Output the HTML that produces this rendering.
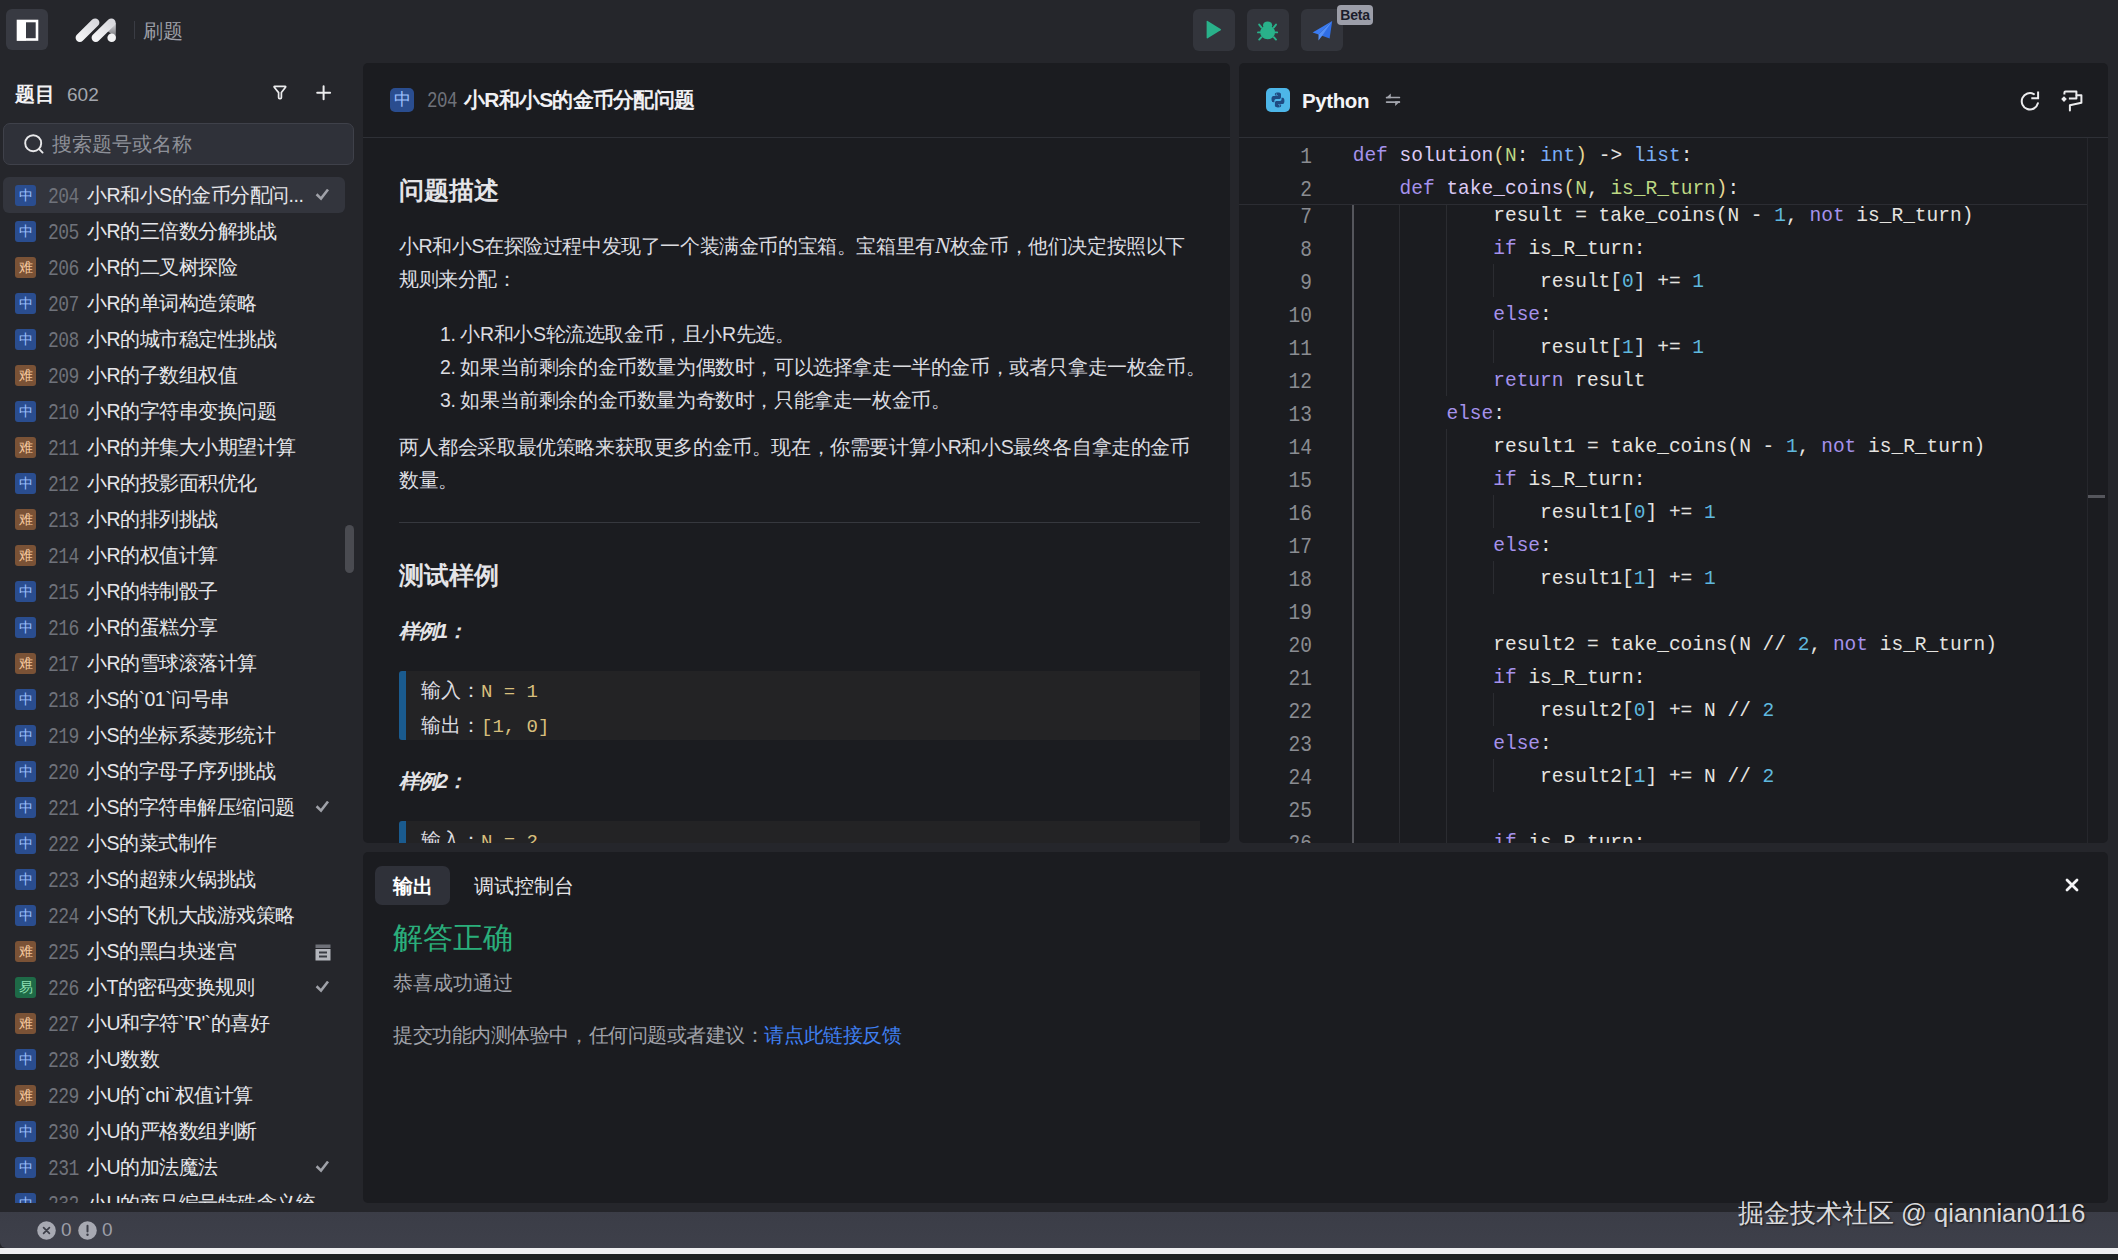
<!DOCTYPE html>
<html><head><meta charset="utf-8">
<style>
*{box-sizing:border-box;margin:0;padding:0}
html,body{width:2118px;height:1260px;overflow:hidden;background:#25262b;font-family:"Liberation Sans",sans-serif;color:#e3e3e6}
.abs{position:absolute}
.mono{font-family:"Liberation Mono",monospace}
/* top bar */
#toggle{left:6px;top:9px;width:42px;height:41px;border-radius:6px;background:#383a42}
#sep{left:134px;top:21px;width:1px;height:18px;background:#3a3c44}
#crumb{left:143px;top:18px;font-size:20px;line-height:26px;color:#9c9ea6}
.tbtn{top:9px;width:42px;height:42px;border-radius:6px;background:#33353c}
#beta{left:1337px;top:5px;width:36px;height:20px;border-radius:4px;background:#9c9ea9;color:#1b1d2b;font-size:14px;font-weight:bold;letter-spacing:-0.2px;line-height:20px;text-align:center}
/* sidebar */
#sbhead{left:15px;top:80px;font-size:20px;line-height:28px;font-weight:bold;color:#f2f2f4}
#sbcount{left:67px;top:80px;font-size:19px;line-height:28px;color:#a3a6ae}
#search{left:3px;top:123px;width:351px;height:42px;border-radius:7px;background:#2f3139;border:1px solid #3f414a}
#search span{position:absolute;left:48px;top:7px;font-size:20px;line-height:26px;color:#8d9098}
#list{left:3px;top:177px;width:342px;height:1026px;overflow:hidden}
.it{position:relative;height:36px;width:342px;border-radius:6px}
.it.sel{background:#33353d}
.bd{font-style:normal;position:absolute;left:12px;top:8px;width:21px;height:21px;border-radius:3px;font-size:14px;line-height:21px;text-align:center}
.bz{background:#2a4d8f;color:#9ec0ff}
.bn{background:#7a5236;color:#f2c59b}
.be{background:#1e6a47;color:#8ee0b4}
.num{font-weight:normal;position:absolute;left:45px;top:2px;font-family:"Liberation Mono",monospace;font-size:18px;letter-spacing:-0.6px;line-height:36px;color:#6f727a;transform:scaleY(1.25);transform-origin:0 19px}
.tt{position:absolute;left:84px;top:0;font-size:19.5px;letter-spacing:-0.5px;line-height:36px;color:#e6e6ea;white-space:nowrap}
.chk{position:absolute;left:310px;top:12px}
.arc{position:absolute;left:312px;top:11px}
#sbscroll{left:345px;top:525px;width:9px;height:48px;border-radius:5px;background:#4a4b51}
/* panels */
.panel{background:#1b1c20;border-radius:5px}
#prob{left:363px;top:63px;width:867px;height:780px;overflow:hidden}
#edit{left:1239px;top:63px;width:869px;height:780px;overflow:hidden}
#out{left:363px;top:852px;width:1745px;height:351px}
.phead{position:absolute;left:0;top:0;right:0;height:75px;border-bottom:1px solid #2e3036}
/* status */
#status{left:0;top:1212px;width:2118px;height:36px;background:linear-gradient(#3b3d47,#3e404a);border-bottom-left-radius:6px}
#wline{left:0;top:1248px;width:2118px;height:6px;background:#efeff1;border-top:0}
#bot{left:0;top:1254px;width:2118px;height:6px;background:#1e2122}
#pc .h{left:0;font-size:24.5px;line-height:30px;font-weight:bold;color:#e4e4e7;white-space:nowrap}
#pc .p{left:0;font-size:19.5px;letter-spacing:-0.4px;line-height:33px;color:#dcdce0;white-space:nowrap}
#pc .h4{left:0;font-size:20px;letter-spacing:-1px;line-height:32px;font-weight:bold;font-style:italic;color:#e4e4e7}
.mi{font-family:"Liberation Serif",serif;font-size:23px;font-style:italic}
#pc .bq{left:0;width:801px;height:69px;background:#232325;border-left:7px solid #1a5b8f;border-radius:3px 0 0 3px;padding:3px 0 0 15px;font-size:19.5px;line-height:33px;color:#dcdce0;white-space:nowrap}
#pc .bq code{font-family:"Liberation Mono",monospace;font-size:19px;color:#d8bf7c}
#code,#sticky{font-family:"Liberation Mono",monospace;font-size:19.53px;line-height:33px;color:#e6e4e0}
.row{position:relative;height:33px}
.row>*{top:2px}
.gd{position:absolute;width:1px;background:#2b2c31}
.ln{font-weight:normal;position:absolute;left:0;top:3px;width:73px;transform:scaleY(1.12);text-align:right;color:#8a8c92;height:33px}
.cl{position:relative;margin-left:113.7px;height:33px;white-space:pre}
#code i,#sticky i{font-style:normal}
i.k{color:#a592ec} i.f{color:#dccaf4} i.t{color:#7aaef6} i.n{color:#5fb8de} i.p{color:#bdd884} i.y{color:#e6d694}
</style></head><body>

<!-- TOP BAR -->
<div id="toggle" class="abs"><svg width="42" height="41" style="position:absolute;left:0;top:0"><rect x="12" y="12" width="19" height="18.5" fill="none" stroke="#ffffff" stroke-width="2.6"/><rect x="11" y="11" width="9" height="20.5" fill="#ffffff"/></svg></div>
<svg class="abs" style="left:70px;top:12px" width="52" height="36" viewBox="70 12 52 36"><defs><linearGradient id="lg1" x1="0" y1="1" x2="1" y2="0"><stop offset="0" stop-color="#f4f4f6"/><stop offset="1" stop-color="#d9d9de"/></linearGradient><linearGradient id="lg2" x1="0" y1="0" x2="0" y2="1"><stop offset="0" stop-color="#dcdce0"/><stop offset="1" stop-color="#6c6d72"/></linearGradient></defs><line x1="79.8" y1="37.8" x2="95.2" y2="22.6" stroke="url(#lg1)" stroke-width="8.4" stroke-linecap="round"/><polygon points="107.5,31 115.8,22.5 115.8,37.5" fill="url(#lg2)"/><line x1="95.8" y1="37.8" x2="111.4" y2="22.6" stroke="url(#lg1)" stroke-width="8.4" stroke-linecap="round"/><circle cx="111.7" cy="37.7" r="4.3" fill="#f2f2f4"/></svg>
<div id="sep" class="abs"></div>
<div id="crumb" class="abs">刷题</div>
<div class="abs tbtn" style="left:1193px"><svg width="42" height="42" viewBox="0 0 42 42"><path d="M13.6 12.6 Q13.6 11.4 14.7 12 L27.6 19.9 Q28.6 20.6 27.6 21.3 L14.7 29.2 Q13.6 29.8 13.6 28.6 Z" fill="#29b18a"/></svg></div>
<div class="abs tbtn" style="left:1247px"><svg width="42" height="42" viewBox="0 0 42 42"><g fill="#29b18a"><ellipse cx="20.6" cy="23.4" rx="7.4" ry="6.8"/><ellipse cx="20.6" cy="16.2" rx="4.6" ry="3.8"/></g><path d="M14.6 18.6L12.2 15.6M26.6 18.6L29 15.6M13.6 23.4H11M27.6 23.4H30.2M14.4 28.2L12.2 30.6M26.8 28.2L29 30.6" stroke="#29b18a" stroke-width="1.9" stroke-linecap="round"/></svg></div>
<div class="abs tbtn" style="left:1301px"><svg width="42" height="42" viewBox="0 0 42 42"><path d="M31.2 12 L11.6 23.6 L17.6 25.6 Z" fill="#3a7bf2"/><path d="M31.2 12 L28.6 29.6 L17.6 25.6 Z" fill="#2f6ee6"/><path d="M31.2 12 L17.6 25.6 L17.4 31.4 L21 27 Z" fill="#5590f7"/></svg></div>
<div id="beta" class="abs">Beta</div>

<!-- SIDEBAR -->
<div id="sbhead" class="abs">题目</div>
<div id="sbcount" class="abs" style="top:81px">602</div>
<svg class="abs" style="left:270px;top:82px" width="20" height="20" viewBox="270 82 20 20"><path d="M274.6 86.4H285.2Q286 86.4 285.5 87.2L281.4 92.6V97.4Q281.4 98.6 280.4 98.6H279.6Q278.6 98.6 278.6 97.4V92.6L274.3 87.2Q273.8 86.4 274.6 86.4Z" fill="none" stroke="#ececee" stroke-width="1.7" stroke-linejoin="round"/></svg>
<svg class="abs" style="left:314px;top:83px" width="20" height="20" viewBox="314 83 20 20"><path d="M323.6 86.3V99.3M317.2 92.8H330.1" stroke="#ececee" stroke-width="2" stroke-linecap="round"/></svg>
<div id="search" class="abs"><svg class="abs" style="left:19px;top:9px" width="22" height="22" viewBox="0 0 22 22"><circle cx="10.2" cy="10.2" r="8" fill="none" stroke="#e8e8ea" stroke-width="1.9"/><path d="M16.2 16.2L19.6 19.6" stroke="#e8e8ea" stroke-width="1.9" stroke-linecap="round"/></svg><span>搜索题号或名称</span></div>
<div id="list" class="abs">
<div class="it sel"><i class="bd bz">中</i><b class="num">204</b><span class="tt">小R和小S的金币分配问...</span><svg class="chk" width="20" height="12" viewBox="0 0 20 12"><path d="M4.5 6.2 L8 9.6 L14.2 1.6" fill="none" stroke="#9fa1a8" stroke-width="2.6" stroke-linecap="square"/></svg></div>
<div class="it"><i class="bd bz">中</i><b class="num">205</b><span class="tt">小R的三倍数分解挑战</span></div>
<div class="it"><i class="bd bn">难</i><b class="num">206</b><span class="tt">小R的二叉树探险</span></div>
<div class="it"><i class="bd bz">中</i><b class="num">207</b><span class="tt">小R的单词构造策略</span></div>
<div class="it"><i class="bd bz">中</i><b class="num">208</b><span class="tt">小R的城市稳定性挑战</span></div>
<div class="it"><i class="bd bn">难</i><b class="num">209</b><span class="tt">小R的子数组权值</span></div>
<div class="it"><i class="bd bz">中</i><b class="num">210</b><span class="tt">小R的字符串变换问题</span></div>
<div class="it"><i class="bd bn">难</i><b class="num">211</b><span class="tt">小R的并集大小期望计算</span></div>
<div class="it"><i class="bd bz">中</i><b class="num">212</b><span class="tt">小R的投影面积优化</span></div>
<div class="it"><i class="bd bn">难</i><b class="num">213</b><span class="tt">小R的排列挑战</span></div>
<div class="it"><i class="bd bn">难</i><b class="num">214</b><span class="tt">小R的权值计算</span></div>
<div class="it"><i class="bd bz">中</i><b class="num">215</b><span class="tt">小R的特制骰子</span></div>
<div class="it"><i class="bd bz">中</i><b class="num">216</b><span class="tt">小R的蛋糕分享</span></div>
<div class="it"><i class="bd bn">难</i><b class="num">217</b><span class="tt">小R的雪球滚落计算</span></div>
<div class="it"><i class="bd bz">中</i><b class="num">218</b><span class="tt">小S的`01`问号串</span></div>
<div class="it"><i class="bd bz">中</i><b class="num">219</b><span class="tt">小S的坐标系菱形统计</span></div>
<div class="it"><i class="bd bz">中</i><b class="num">220</b><span class="tt">小S的字母子序列挑战</span></div>
<div class="it"><i class="bd bz">中</i><b class="num">221</b><span class="tt">小S的字符串解压缩问题</span><svg class="chk" width="20" height="12" viewBox="0 0 20 12"><path d="M4.5 6.2 L8 9.6 L14.2 1.6" fill="none" stroke="#9fa1a8" stroke-width="2.6" stroke-linecap="square"/></svg></div>
<div class="it"><i class="bd bz">中</i><b class="num">222</b><span class="tt">小S的菜式制作</span></div>
<div class="it"><i class="bd bz">中</i><b class="num">223</b><span class="tt">小S的超辣火锅挑战</span></div>
<div class="it"><i class="bd bz">中</i><b class="num">224</b><span class="tt">小S的飞机大战游戏策略</span></div>
<div class="it"><i class="bd bn">难</i><b class="num">225</b><span class="tt">小S的黑白块迷宫</span><svg class="arc" width="16" height="17" viewBox="0 0 16 17"><rect x="0.5" y="0.5" width="15" height="3.5" fill="#6e7078"/><rect x="0.5" y="5" width="15" height="11.5" fill="#b4b6bd"/><rect x="4" y="7.5" width="8" height="2" fill="#3a3c44"/><rect x="4" y="11.5" width="8" height="2" fill="#3a3c44"/></svg></div>
<div class="it"><i class="bd be">易</i><b class="num">226</b><span class="tt">小T的密码变换规则</span><svg class="chk" width="20" height="12" viewBox="0 0 20 12"><path d="M4.5 6.2 L8 9.6 L14.2 1.6" fill="none" stroke="#9fa1a8" stroke-width="2.6" stroke-linecap="square"/></svg></div>
<div class="it"><i class="bd bn">难</i><b class="num">227</b><span class="tt">小U和字符`&#39;R&#39;`的喜好</span></div>
<div class="it"><i class="bd bz">中</i><b class="num">228</b><span class="tt">小U数数</span></div>
<div class="it"><i class="bd bn">难</i><b class="num">229</b><span class="tt">小U的`chi`权值计算</span></div>
<div class="it"><i class="bd bz">中</i><b class="num">230</b><span class="tt">小U的严格数组判断</span></div>
<div class="it"><i class="bd bz">中</i><b class="num">231</b><span class="tt">小U的加法魔法</span><svg class="chk" width="20" height="12" viewBox="0 0 20 12"><path d="M4.5 6.2 L8 9.6 L14.2 1.6" fill="none" stroke="#9fa1a8" stroke-width="2.6" stroke-linecap="square"/></svg></div>
<div class="it"><i class="bd bz">中</i><b class="num">232</b><span class="tt">小U的商品编号特殊含义统</span></div>
</div>
<div id="sbscroll" class="abs"></div>

<!-- PROBLEM PANEL -->
<div id="prob" class="abs panel">
  <div class="phead"></div>
  <i class="abs bd bz" style="left:27px;top:25px;width:24px;height:24px;line-height:24px;font-size:17px;border-radius:5px">中</i>
  <span class="abs mono" style="left:64px;top:23px;font-size:17.5px;letter-spacing:-0.5px;line-height:30px;color:#6f727a;transform:scaleY(1.22);transform-origin:0 15px">204</span>
  <span class="abs" style="left:101px;top:22px;font-size:21px;letter-spacing:-0.75px;line-height:30px;font-weight:bold;color:#f0f0f3">小R和小S的金币分配问题</span>
  <div class="abs" id="pc" style="left:36px;top:0;width:801px">
    <div class="abs h" style="top:113px">问题描述</div>
    <div class="abs p" style="top:165.5px">小R和小S在探险过程中发现了一个装满金币的宝箱。宝箱里有<i class="mi">N</i>枚金币，他们决定按照以下<br>规则来分配：</div>
    <div class="abs p" style="top:254.5px;left:41px">1.&nbsp;小R和小S轮流选取金币，且小R先选。<br>2.&nbsp;如果当前剩余的金币数量为偶数时，可以选择拿走一半的金币，或者只拿走一枚金币。<br>3.&nbsp;如果当前剩余的金币数量为奇数时，只能拿走一枚金币。</div>
    <div class="abs p" style="top:367.5px">两人都会采取最优策略来获取更多的金币。现在，你需要计算小R和小S最终各自拿走的金币<br>数量。</div>
    <div class="abs" style="top:459px;left:0;width:801px;height:1px;background:#36383e"></div>
    <div class="abs h" style="top:498px">测试样例</div>
    <div class="abs h4" style="top:552px">样例1：</div>
    <div class="abs bq" style="top:608px"><div>输入：<code>N = 1</code></div><div>输出：<code>[1, 0]</code></div></div>
    <div class="abs h4" style="top:702px">样例2：</div>
    <div class="abs bq" style="top:758px"><div>输入：<code>N = 2</code></div><div>输出：<code>[1, 1]</code></div></div>
  </div>
</div>

<!-- EDITOR PANEL -->
<div id="edit" class="abs panel">
  <div class="phead"></div>
  <svg class="abs" style="left:27px;top:25px" width="24" height="24" viewBox="0 0 24 24"><rect width="24" height="24" rx="5" fill="#4db6e8"/><path d="M11.9 4.6c-3.2 0-3 1.4-3 1.4v1.5h3.1v.5H7.6S5.5 7.8 5.5 11.1s1.8 3.1 1.8 3.1h1.1v-1.5s-.1-1.8 1.8-1.8h3.1s1.7 0 1.7-1.7V6.4s.3-1.8-3.1-1.8zm-1.7 1a.56.56 0 1 1 0 1.1.56.56 0 0 1 0-1.1z" fill="#1f4b82"/><path d="M12.1 19.4c3.2 0 3-1.4 3-1.4v-1.5h-3.1V16h4.3s2.1.2 2.1-3.1-1.8-3.1-1.8-3.1h-1.1v1.5s.1 1.8-1.8 1.8h-3.1s-1.7 0-1.7 1.7v2.8s-.3 1.8 3.1 1.8zm1.7-1a.56.56 0 1 1 0-1.1.56.56 0 0 1 0 1.1z" fill="#1f4b82"/></svg>
  <span class="abs" style="left:63px;top:23px;font-size:20.5px;letter-spacing:-0.4px;line-height:30px;font-weight:bold;color:#f4f4f6">Python</span>
  <svg class="abs" style="left:143px;top:26px" width="22" height="22" viewBox="1382 89 22 22"><path d="M1386.6 97.5H1399.4M1386.6 102.1H1399.4" stroke="#a3a5ad" stroke-width="1.7" stroke-linecap="round"/><path d="M1385.8 98.3L1390.8 93.6V98.3Z M1400.2 101.3L1395.2 106V101.3Z" fill="#a3a5ad"/></svg>
  <svg class="abs" style="left:776px;top:23px" width="70" height="34" viewBox="2015 85 70 34"><path d="M2033.9 93.1A8.2 8.2 0 1 0 2037.9 102.3" fill="none" stroke="#ececee" stroke-width="2" stroke-linecap="round"/><path d="M2038.1 91.4V97.3H2032.3" fill="none" stroke="#ececee" stroke-width="2" stroke-linecap="square"/><path d="M2064 95.2L2066.8 98.1L2064 101L2061.2 98.1Z" fill="#ececee"/><path d="M2064.4 93.4V91.8Q2064.4 90.6 2065.6 90.6H2076.4V97.6H2068.9" fill="none" stroke="#ececee" stroke-width="2" stroke-linejoin="round"/><path d="M2076.6 94.3H2081.4V101.8L2069.9 104.2V109.6" fill="none" stroke="#ececee" stroke-width="2" stroke-linejoin="round" stroke-linecap="round"/></svg>
  <div class="abs" id="code" style="left:0;top:134.5px;width:848px;height:646px;overflow:hidden">
<div class="gd" style="left:113px;top:0;height:646px;background:#55565c;width:1.5px"></div><div class="gd" style="left:160px;top:0;height:646px"></div><div class="gd" style="left:207px;top:0;height:198px"></div><div class="gd" style="left:207px;top:231px;height:415px"></div><div class="gd" style="left:254px;top:66px;height:33px"></div><div class="gd" style="left:254px;top:132px;height:33px"></div><div class="gd" style="left:254px;top:297px;height:33px"></div><div class="gd" style="left:254px;top:363px;height:33px"></div><div class="gd" style="left:254px;top:495px;height:33px"></div><div class="gd" style="left:254px;top:561px;height:33px"></div>
<div class="row"><b class="ln">7</b><div class="cl">            result = take_coins(N - <i class="n">1</i>, <i class="k">not</i> is_R_turn)</div></div>
<div class="row"><b class="ln">8</b><div class="cl">            <i class="k">if</i> is_R_turn:</div></div>
<div class="row"><b class="ln">9</b><div class="cl">                result[<i class="n">0</i>] += <i class="n">1</i></div></div>
<div class="row"><b class="ln">10</b><div class="cl">            <i class="k">else</i>:</div></div>
<div class="row"><b class="ln">11</b><div class="cl">                result[<i class="n">1</i>] += <i class="n">1</i></div></div>
<div class="row"><b class="ln">12</b><div class="cl">            <i class="k">return</i> result</div></div>
<div class="row"><b class="ln">13</b><div class="cl">        <i class="k">else</i>:</div></div>
<div class="row"><b class="ln">14</b><div class="cl">            result1 = take_coins(N - <i class="n">1</i>, <i class="k">not</i> is_R_turn)</div></div>
<div class="row"><b class="ln">15</b><div class="cl">            <i class="k">if</i> is_R_turn:</div></div>
<div class="row"><b class="ln">16</b><div class="cl">                result1[<i class="n">0</i>] += <i class="n">1</i></div></div>
<div class="row"><b class="ln">17</b><div class="cl">            <i class="k">else</i>:</div></div>
<div class="row"><b class="ln">18</b><div class="cl">                result1[<i class="n">1</i>] += <i class="n">1</i></div></div>
<div class="row"><b class="ln">19</b><div class="cl"></div></div>
<div class="row"><b class="ln">20</b><div class="cl">            result2 = take_coins(N // <i class="n">2</i>, <i class="k">not</i> is_R_turn)</div></div>
<div class="row"><b class="ln">21</b><div class="cl">            <i class="k">if</i> is_R_turn:</div></div>
<div class="row"><b class="ln">22</b><div class="cl">                result2[<i class="n">0</i>] += N // <i class="n">2</i></div></div>
<div class="row"><b class="ln">23</b><div class="cl">            <i class="k">else</i>:</div></div>
<div class="row"><b class="ln">24</b><div class="cl">                result2[<i class="n">1</i>] += N // <i class="n">2</i></div></div>
<div class="row"><b class="ln">25</b><div class="cl"></div></div>
<div class="row"><b class="ln">26</b><div class="cl">            <i class="k">if</i> is_R_turn:</div></div>
  </div>
  <div class="abs" id="sticky" style="left:0;top:75px;width:848px;height:67px;background:#1b1c20;border-bottom:1px solid #2c2d33">
<div class="row"><b class="ln">1</b><div class="cl"><i class="k">def</i> <i class="f">solution</i><i class="y">(</i><i class="p">N</i>: <i class="t">int</i><i class="y">)</i> -&gt; <i class="t">list</i>:</div></div><div class="row"><b class="ln">2</b><div class="cl">    <i class="k">def</i> <i class="f">take_coins</i><i class="y">(</i><i class="p">N</i>, <i class="p">is_R_turn</i><i class="y">)</i>:</div></div>
  </div>
  <div class="abs" style="left:848px;top:75px;width:1px;height:705px;background:#26272c"></div>
  <div class="abs" style="left:849px;top:432px;width:17px;height:3px;background:#55565c"></div>
</div>

<!-- OUTPUT PANEL -->
<div id="out" class="abs panel">
  <div class="abs" style="left:12px;top:14px;width:75px;height:39px;border-radius:7px;background:#2f3139"></div>
  <span class="abs" style="left:30px;top:19px;font-size:20px;line-height:30px;font-weight:bold;color:#ffffff">输出</span>
  <span class="abs" style="left:111px;top:19px;font-size:20px;line-height:30px;color:#e6e6e9">调试控制台</span>
  <svg class="abs" style="left:1701px;top:25px" width="16" height="16" viewBox="0 0 16 16"><path d="M3 3L13 13M13 3L3 13" stroke="#f4f4f6" stroke-width="2.8" stroke-linecap="round"/></svg>
  <span class="abs" style="left:30px;top:66px;font-size:30px;line-height:40px;color:#2aae7b">解答正确</span>
  <span class="abs" style="left:30px;top:116px;font-size:19.5px;line-height:30px;color:#a0a2a9">恭喜成功通过</span>
  <span class="abs" style="left:30px;top:168px;font-size:19.5px;letter-spacing:-0.45px;line-height:30px;color:#a0a2a9;white-space:nowrap">提交功能内测体验中，任何问题或者建议：<span style="color:#3f7ff0">请点此链接反馈</span></span>
</div>

<!-- STATUS -->
<div id="status" class="abs">
  <svg class="abs" style="left:37px;top:9px" width="19" height="19" viewBox="0 0 19 19"><circle cx="9.5" cy="9.5" r="9.3" fill="#a7a9b2"/><path d="M6.6 6.6L12.4 12.4M12.4 6.6L6.6 12.4" stroke="#3c3e48" stroke-width="1.7" stroke-linecap="round"/></svg>
  <span class="abs" style="left:61px;top:4px;font-size:19px;line-height:28px;color:#9c9ea8">0</span>
  <svg class="abs" style="left:78px;top:9px" width="19" height="19" viewBox="0 0 19 19"><circle cx="9.5" cy="9.5" r="9.3" fill="#a7a9b2"/><path d="M9.5 4.8V10.6" stroke="#3c3e48" stroke-width="2" stroke-linecap="round"/><circle cx="9.5" cy="13.8" r="1.2" fill="#3c3e48"/></svg>
  <span class="abs" style="left:102px;top:4px;font-size:19px;line-height:28px;color:#9c9ea8">0</span>
</div>
<div class="abs" style="left:1738px;top:1196px;font-size:25.5px;line-height:34px;color:#dadadc;white-space:nowrap;text-shadow:1px 1px 2px rgba(0,0,0,.6);z-index:5">掘金技术社区 @ qiannian0116</div>
<div id="wline" class="abs"></div>
<div id="bot" class="abs"></div>
</body></html>
